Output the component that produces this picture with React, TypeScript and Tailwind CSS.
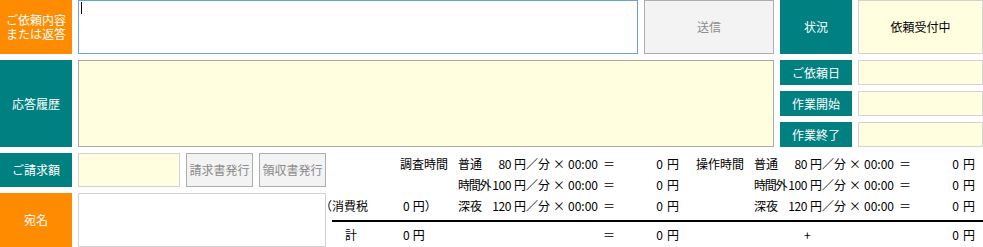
import React from "react";

const colAlign = [
  "justify-start",
  "justify-start",
  "justify-start",
  "justify-end",
  "justify-start pl-[3px]",
  "justify-start pl-[3px]",
  "justify-start pl-[2px]",
  "justify-start pl-[3px]",
  "justify-end pr-[1px]",
  "justify-start pl-[3px]",
  "justify-start",
  "justify-start",
  "justify-end",
  "justify-start pl-[3px]",
  "justify-start pl-[3px]",
  "justify-start pl-[2px]",
  "justify-start pl-[3px]",
  "justify-end pr-[1px]",
  "justify-start pl-[3px]",
];

const gridCols =
  "grid grid-cols-[68px_58px_35px_18px_39px_16px_34px_20px_44px_32px_58px_35px_18px_39px_16px_34px_20px_44px_23px]";

function CalcRow({ cells, h }: { cells: React.ReactNode[]; h: string }) {
  return (
    <div className={`${gridCols} ${h}`}>
      {cells.map((c, i) => (
        <div key={i} className={`flex items-center whitespace-nowrap ${colAlign[i]}`}>
          {c}
        </div>
      ))}
    </div>
  );
}

function Label({ children, color, className = "" }: { children: React.ReactNode; color: "orange" | "teal"; className?: string }) {
  return (
    <div
      className={`flex items-center justify-center text-center text-white text-[12px] leading-[14px] ${
        color === "orange" ? "bg-[#ff8c00]" : "bg-[#008080]"
      } ${className}`}
    >
      {children}
    </div>
  );
}

const num = "tracking-[-0.4px]";

export default function App() {
  const kindEl = (k: string) => (k === "時間外" ? <span className="tracking-[-1.3px]">{k}</span> : k);
  const rateRow = (kind: string, rate: string, label: string, kindR: string) => [
    "",
    label,
    kindEl(kind),
    <span className={num}>{rate}</span>,
    "円／分",
    "×",
    <span>00:00</span>,
    "＝",
    "0",
    "円",
    kindR,
    kindEl(kind),
    <span className={num}>{rate}</span>,
    "円／分",
    "×",
    <span>00:00</span>,
    "＝",
    "0",
    "円",
  ];
  const r1 = rateRow("普通", "80", "調査時間", "操作時間");
  const r2 = rateRow("時間外", "100", "", "");
  const r3 = rateRow("深夜", "120", "", "");
  r3[0] = <span className="-ml-[12px]">（消費税</span>;
  r3[1] = (
    <span className="pl-[3px]">
      0<span className="ml-[3px]">円）</span>
    </span>
  );
  const r4 = [
    <span className="pl-[13px]">計</span>,
    <span className="pl-[3px]">
      0<span className="ml-[3px]">円</span>
    </span>,
    "",
    "",
    "",
    "",
    "",
    "＝",
    "0",
    "円",
    "",
    "",
    "",
    <span className="-ml-[6px]">+</span>,
    "",
    "",
    "",
    "0",
    "円",
  ];

  return (
    <div className="w-[983px] h-[247px] bg-white font-['Noto_Sans_CJK_JP',sans-serif] text-[12px] text-black overflow-hidden">
      <div className="grid grid-cols-[72px_560px_130px_72px_125px] grid-rows-[54px_25px_25px_25px_34px_54px] gap-[6px]">
        {/* Row 1 */}
        <Label color="orange">
          ご依頼内容
          <br />
          または返答
        </Label>
        <div className="relative border border-[#6ca0dc] bg-white">
          <span className="absolute left-[2px] top-[1px] w-[1px] h-[12px] bg-black" />
        </div>
        <div className="flex items-center justify-center border border-[#adadad] bg-[#f3f3f3] text-[#8c8c8c]">
          送信
        </div>
        <Label color="teal">状況</Label>
        <div className="flex items-center justify-center border border-[#d3d3d3] bg-[#ffffe0] text-black">
          依頼受付中
        </div>

        {/* Row 2 block */}
        <Label color="teal" className="row-span-3">
          応答履歴
        </Label>
        <div className="row-span-3 col-span-2 border border-[#a9a9a9] bg-[#ffffe0]" />
        <Label color="teal">ご依頼日</Label>
        <div className="border border-[#d3d3d3] bg-[#ffffe0]" />
        <Label color="teal">作業開始</Label>
        <div className="border border-[#d3d3d3] bg-[#ffffe0]" />
        <Label color="teal">作業終了</Label>
        <div className="border border-[#d3d3d3] bg-[#ffffe0]" />

        {/* Row 5 */}
        <Label color="teal">ご請求額</Label>
        <div className="row-span-2 col-span-4 flex gap-[6px]">
          <div className="w-[248px] flex flex-col gap-[6px]">
            <div className="h-[34px] flex gap-[6px]">
              <div className="w-[102px] border border-[#d3d3d3] bg-[#ffffe0]" />
              <div className="w-[67px] flex items-center justify-center border border-[#adadad] bg-[#f3f3f3] text-[#8a8a8a] whitespace-nowrap">
                請求書発行
              </div>
              <div className="w-[67px] flex items-center justify-center border border-[#adadad] bg-[#f3f3f3] text-[#8a8a8a] whitespace-nowrap">
                領収書発行
              </div>
            </div>
            <div className="h-[54px] border border-[#d3d3d3] bg-white" />
          </div>
          <div className="w-[651px] flex flex-col">
            <CalcRow cells={r1} h="h-[21px]" />
            <CalcRow cells={r2} h="h-[21px]" />
            <CalcRow cells={r3} h="h-[21px]" />
            <div className="h-[6px] border-b-[2px] border-black" />
            <CalcRow cells={r4} h="h-[25px]" />
          </div>
        </div>
        <Label color="orange">宛名</Label>
      </div>
    </div>
  );
}
